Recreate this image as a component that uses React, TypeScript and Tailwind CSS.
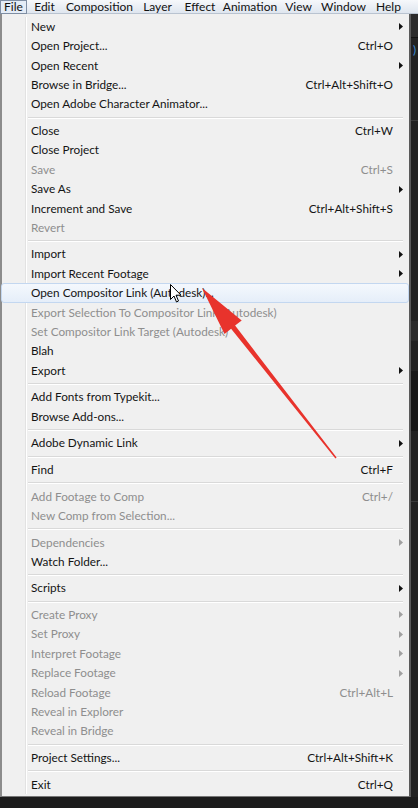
import React from 'react'

type Item =
  | { sep: true }
  | { label: string; key?: string; sub?: boolean; off?: boolean; hot?: boolean; sep?: false }

const items: Item[] = [
  { label: 'New', sub: true },
  { label: 'Open Project...', key: 'Ctrl+O' },
  { label: 'Open Recent', sub: true },
  { label: 'Browse in Bridge...', key: 'Ctrl+Alt+Shift+O' },
  { label: 'Open Adobe Character Animator...' },
  { sep: true },
  { label: 'Close', key: 'Ctrl+W' },
  { label: 'Close Project' },
  { label: 'Save', key: 'Ctrl+S', off: true },
  { label: 'Save As', sub: true },
  { label: 'Increment and Save', key: 'Ctrl+Alt+Shift+S' },
  { label: 'Revert', off: true },
  { sep: true },
  { label: 'Import', sub: true },
  { label: 'Import Recent Footage', sub: true },
  { label: 'Open Compositor Link (Autodesk)...', hot: true },
  { label: 'Export Selection To Compositor Link (Autodesk)', off: true },
  { label: 'Set Compositor Link Target (Autodesk)', off: true },
  { label: 'Blah' },
  { label: 'Export', sub: true },
  { sep: true },
  { label: 'Add Fonts from Typekit...' },
  { label: 'Browse Add-ons...' },
  { sep: true },
  { label: 'Adobe Dynamic Link', sub: true },
  { sep: true },
  { label: 'Find', key: 'Ctrl+F' },
  { sep: true },
  { label: 'Add Footage to Comp', key: 'Ctrl+/', off: true },
  { label: 'New Comp from Selection...', off: true },
  { sep: true },
  { label: 'Dependencies', sub: true, off: true },
  { label: 'Watch Folder...' },
  { sep: true },
  { label: 'Scripts', sub: true },
  { sep: true },
  { label: 'Create Proxy', sub: true, off: true },
  { label: 'Set Proxy', sub: true, off: true },
  { label: 'Interpret Footage', sub: true, off: true },
  { label: 'Replace Footage', sub: true, off: true },
  { label: 'Reload Footage', key: 'Ctrl+Alt+L', off: true },
  { label: 'Reveal in Explorer', off: true },
  { label: 'Reveal in Bridge', off: true },
  { sep: true },
  { label: 'Project Settings...', key: 'Ctrl+Alt+Shift+K' },
  { sep: true },
  { label: 'Exit', key: 'Ctrl+Q' },
]

const bar = [
  { t: 'Edit', w: 'w-[35px]' },
  { t: 'Composition', w: 'w-[75px]' },
  { t: 'Layer', w: 'w-[41px]' },
  { t: 'Effect', w: 'w-[44px]' },
  { t: 'Animation', w: 'w-[56px]' },
  { t: 'View', w: 'w-[41px]' },
  { t: 'Window', w: 'w-[49px]' },
  { t: 'Help', w: 'w-[41px]' },
]

function Arrow({ off }: { off?: boolean }) {
  return (
    <svg width="4" height="7" viewBox="0 0 4 7" className="ml-[6px]">
      <path d="M0 0 L4 3.5 L0 7 Z" fill={off ? '#a0a0a0' : '#111'} />
    </svg>
  )
}

function Row({ item }: { item: Exclude<Item, { sep: true }> }) {
  return (
    <div
      className={
        'flex h-[19.4px] items-center ' +
        (item.hot
          ? 'mx-[-1px] rounded-[3px] border border-[#c3d7f0] bg-gradient-to-b from-[#f4f8fd] to-[#e5eef9]'
          : '')
      }
    >
      <div
        className={
          'h-full w-[24px] shrink-0 ' +
          (item.hot ? '' : 'border-r border-[#e2e2e2] shadow-[1px_0_0_#ffffff]')
        }
      />
      <span className={'flex-1 pl-[5px] ' + (item.off ? 'text-[#8e8e8e]' : 'text-[#141414]')}>
        {item.label}
      </span>
      {item.key && (
        <span className={'pr-[15px] ' + (item.off ? 'text-[#8e8e8e]' : 'text-[#141414]')}>
          {item.key}
        </span>
      )}
      {item.sub && (
        <div className="flex w-[15px] items-center">
          <Arrow off={item.off} />
        </div>
      )}
    </div>
  )
}

export default function App() {
  return (
    <div
      className="relative h-[808px] w-[418px] overflow-hidden bg-[#1c1c1c] text-[11.75px] leading-none"
      style={{ fontFamily: 'Lato, "Noto Sans", sans-serif' }}
    >
      {/* menu bar */}
      <div className="flex h-[14px] items-center border-b border-[#b9c3d0] bg-gradient-to-b from-[#f6f8fb] to-[#dfe6ef] text-[12px] text-[#111]">
        <div className="flex h-[14px] w-[27px] items-center justify-center border border-[#7f8ea3] bg-[#e4ecf6]">
          File
        </div>
        {bar.map((b) => (
          <div key={b.t} className={'flex items-center justify-center ' + b.w}>
            {b.t}
          </div>
        ))}
      </div>

      <div className="flex">
        {/* dropdown */}
        <div className="w-[411px] shrink-0 border-l-2 border-r-2 border-b border-l-[#8c8c8c] border-r-[#5a5a5a] border-b-[#777] bg-[#f0f0f0] pt-[3px] pb-[2px] pr-[1px]">
          {items.map((it, i) =>
            it.sep ? (
              <div key={i} className="flex h-[7.2px] items-center">
                <div className="h-full w-[24px] shrink-0 border-r border-[#e2e2e2] shadow-[1px_0_0_#ffffff]" />
                <div className="ml-[2px] mr-[5px] flex-1 border-t border-b border-t-[#d9d9d9] border-b-white" />
              </div>
            ) : (
              <Row key={i} item={it} />
            )
          )}
        </div>

        {/* app panel behind */}
        <div className="flex flex-1 flex-col bg-[#222]">
          <div className="h-[24px] border-b border-[#111] bg-[#2b2b2b]" />
          <div className="pl-[2px] pt-[6px] text-[#3d8fd6]">)</div>
          <div className="mt-[64px] h-[1px] bg-[#3a3a3a]" />
          <div className="mt-[200px] h-[20px] bg-[#2a2a2a]" />
          <div className="mt-[30px] h-[60px] bg-[#181818]" />
          <div className="mt-[70px] h-[1px] bg-[#3a3a3a]" />
        </div>
      </div>

      {/* mouse cursor */}
      <svg className="absolute left-[170px] top-[284px]" width="12" height="19" viewBox="0 0 12 19">
        <path
          d="M0.5 0.5 L0.5 15.5 L4 12 L6.5 18 L8.5 17 L6 11.2 L11 11.2 Z"
          fill="#fff"
          stroke="#000"
          strokeWidth="1"
          strokeLinejoin="round"
        />
      </svg>

      {/* red annotation arrow */}
      <svg className="absolute left-0 top-0" width="418" height="808" viewBox="0 0 418 808">
        <polygon
          points="202,288 241.7,320.4 235.1,325.6 336.6,457.6 335.4,458.4 231.1,328.8 224.5,334"
          fill="#e8332c"
        />
      </svg>
    </div>
  )
}
